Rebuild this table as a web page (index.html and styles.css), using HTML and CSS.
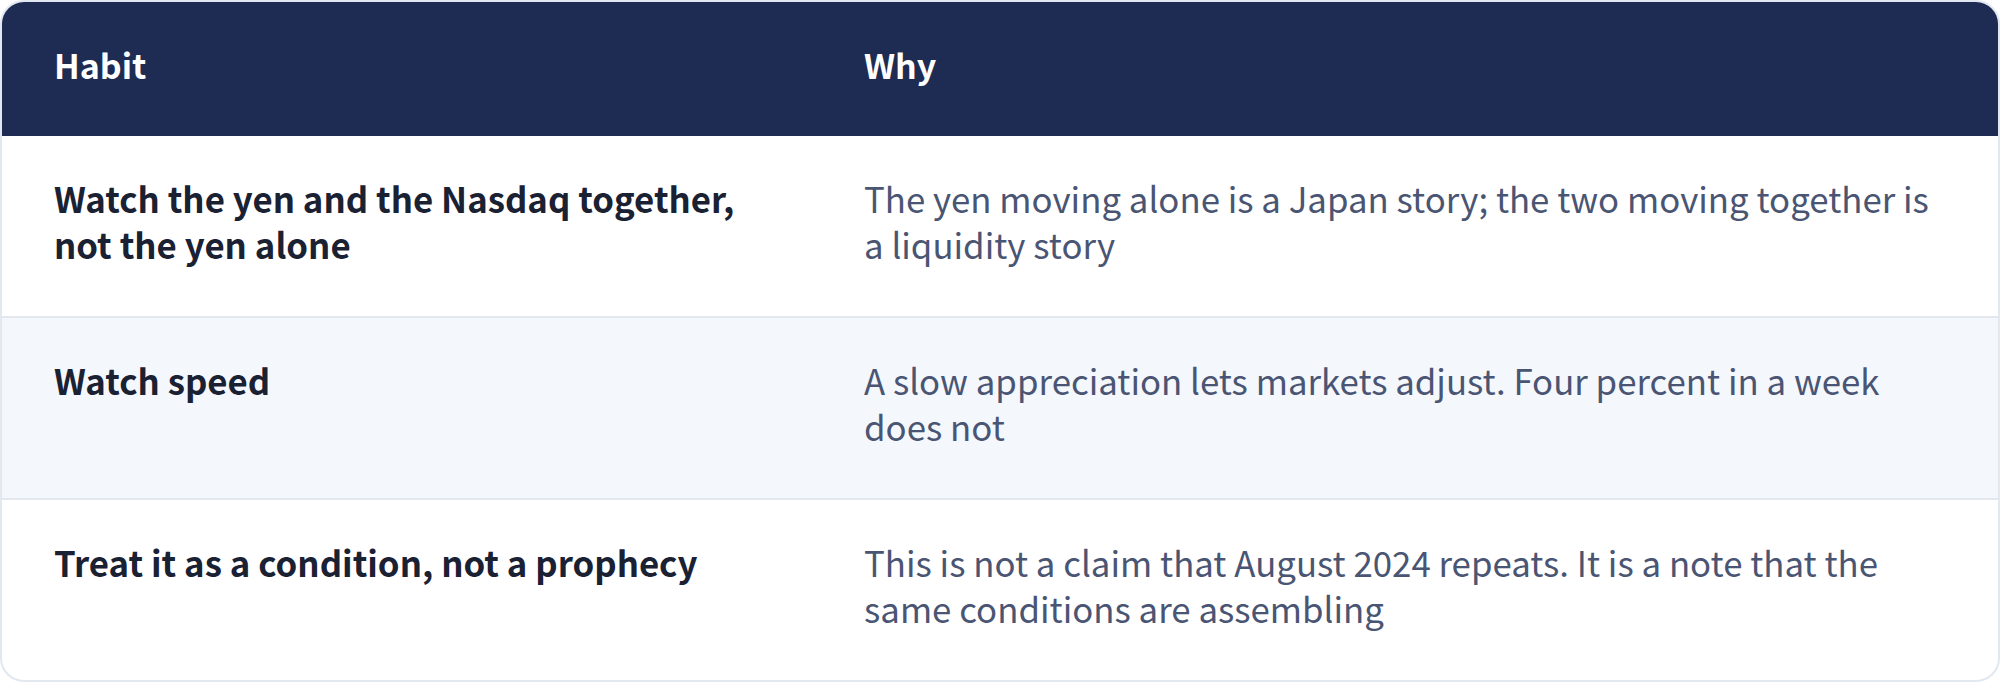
FILE: index.html
```html
<!DOCTYPE html>
<html lang="en">
<head>
<meta charset="utf-8">
<title>Habits</title>
<link rel="stylesheet" href="styles.css">
</head>
<body>
<div class="table-wrap">
  <table class="habits">
    <colgroup>
      <col class="col-habit">
      <col class="col-why">
    </colgroup>
    <thead>
      <tr>
        <th>Habit</th>
        <th>Why</th>
      </tr>
    </thead>
    <tbody>
      <tr>
        <td class="habit">Watch the yen and the Nasdaq together, not the yen alone</td>
        <td class="why">The yen moving alone is a Japan story; the two moving together is a liquidity story</td>
      </tr>
      <tr class="alt">
        <td class="habit">Watch speed</td>
        <td class="why">A slow appreciation lets markets adjust. Four percent in a week does not</td>
      </tr>
      <tr>
        <td class="habit">Treat it as a condition, not a prophecy</td>
        <td class="why">This is not a claim that August 2024 repeats. It is a note that the same conditions are assembling</td>
      </tr>
    </tbody>
  </table>
</div>
</body>
</html>
```
FILE: styles.css
```css
html, body {
  margin: 0;
  padding: 0;
  background: #ffffff;
}

body {
  font-family: "Noto Sans CJK KR", "Noto Sans", sans-serif;
}

.table-wrap {
  width: 2000px;
  height: 682px;
  box-sizing: border-box;
  border: 2px solid #e2e8f0;
  border-radius: 24px;
  overflow: hidden;
}

.habits {
  width: 100%;
  border-collapse: collapse;
  table-layout: fixed;
}

.col-habit {
  width: 810px;
}

.habits th {
  background: #1e2b52;
  color: #ffffff;
  font-size: 34px;
  font-weight: 700;
  line-height: 46px;
  text-align: left;
  padding: 40px 52px 48px 52px;
}

.habits td {
  font-size: 34.8px;
  line-height: 46px;
  padding: 39px 52px 49px 52px;
  vertical-align: top;
  border-bottom: 2px solid #e2e8f0;
}

.habits tbody tr:last-child td {
  border-bottom: none;
}

.habits td.habit {
  font-weight: 700;
  color: #1a2133;
}

.habits td.why {
  font-weight: 400;
  color: #4a5573;
}

.habits tr.alt td {
  background: #f4f7fc;
}
```
